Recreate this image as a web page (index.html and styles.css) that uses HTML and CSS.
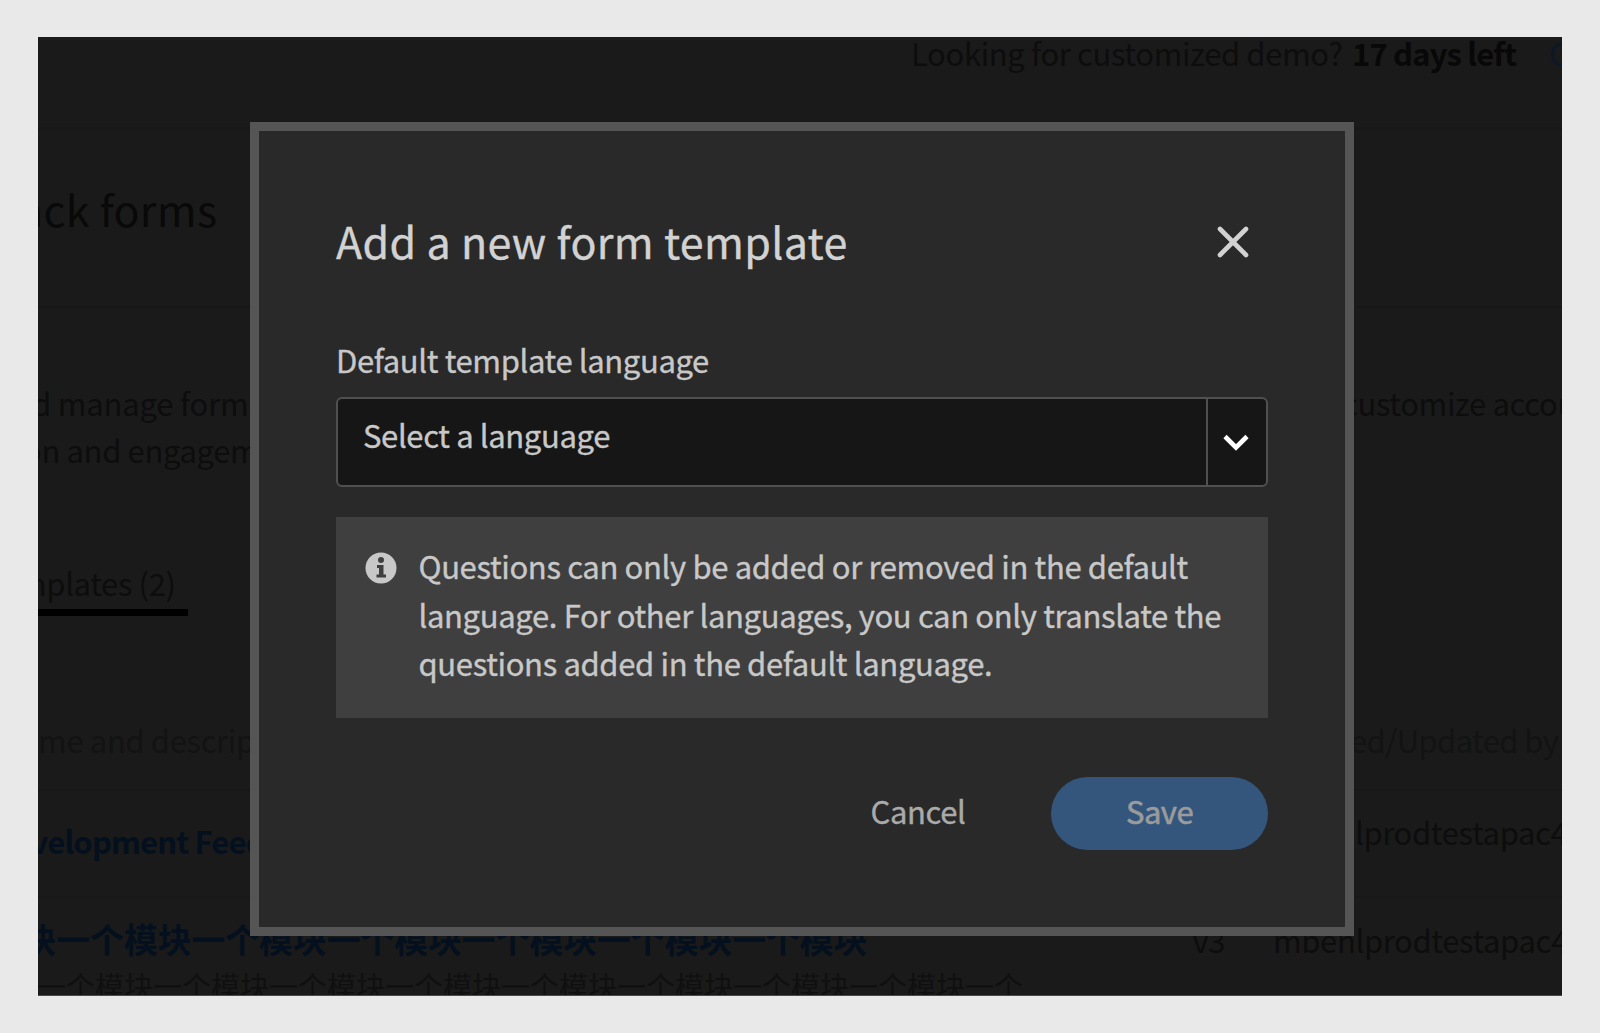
FILE: index.html
```html
<!DOCTYPE html>
<html lang="en">
<head>
<meta charset="utf-8">
<title>Feedback forms</title>
<link rel="stylesheet" href="styles.css">
</head>
<body>
<main class="frame">
  <header class="topbar">
    <span class="demo">Looking for customized demo?</span>
    <strong class="days">17 days left</strong>
    <span class="contact">C</span>
  </header>
  <section class="heading"><h1>ack forms</h1></section>
  <section class="intro">
    <p class="intro-left"><span class="line1">d manage forms</span><br><span class="line2">on and engagem</span></p>
    <p class="intro-right">customize accou</p>
  </section>
  <nav class="tab">mplates (2)</nav>
  <div class="row head">
    <span class="name">ame and descrip</span>
    <span class="owner">ed/Updated by</span>
  </div>
  <div class="row first">
    <span class="name link">velopment Feed</span>
    <span class="owner">lprodtestapac4</span>
  </div>
  <div class="row second">
    <div class="name">
      <div class="cn-title">块一个模块一个模块一个模块一个模块一个模块一个模块</div>
      <div class="cn-desc">一个模块一个模块一个模块一个模块一个模块一个模块一个模块一个模块一个</div>
    </div>
    <span class="version">v3</span>
    <span class="owner">mbenlprodtestapac4</span>
  </div>
</main>

<div class="dialog" role="dialog">
  <div class="dialog-head">
    <h2>Add a new form template</h2>
    <svg class="close" viewBox="0 0 32 32"><path d="M3 3 29 29M29 3 3 29" fill="none" stroke="#d2d2d2" stroke-width="4.600" stroke-linecap="round"/></svg>
  </div>
  <label class="label">Default template language</label>
  <div class="select">
    <span class="value">Select a language</span>
    <span class="arrow"><svg viewBox="0 0 26 18"><path d="M2 2.500 13 13.500 24 2.500" fill="none" stroke="#fff" stroke-width="4.600"/></svg></span>
  </div>
  <div class="info">
    <svg class="info-icon" viewBox="0 0 32 32"><circle cx="16" cy="16" r="15.500" fill="#c8c8c8"/><circle cx="16" cy="8" r="3" fill="#3f3f3f"/><path d="M12 13h6.500v9.500H21v3H11.500v-3H14V16h-2z" fill="#3f3f3f"/></svg>
    <p>Questions can only be added or removed in the default<br>language. For other languages, you can only translate the<br>questions added in the default language.</p>
  </div>
  <div class="actions">
    <span class="cancel">Cancel</span>
    <button class="save">Save</button>
  </div>
</div>
</body>
</html>
```
FILE: styles.css
```css
* { box-sizing: border-box; }
body {
  margin: 0;
  height: 1033px;
  padding: 37px 38px;
  background: #e9e9e9;
  font: 31px/40px "Noto Sans CJK SC", "Noto Sans", sans-serif;
  letter-spacing: -0.370px;
  overflow: hidden;
}
h1, h2, p { margin: 0; font-weight: 400; }
.frame {
  width: 1524px;
  height: 959px;
  overflow: hidden;
  background: #1a1a1a;
  border-bottom: 1px solid #4a4a4a;
  color: #0d0d0d;
  white-space: nowrap;
}
.topbar {
  display: flex;
  height: 93px;
  padding-left: 873px;
  line-height: 31px;
  border-bottom: 3px solid #181818;
}
.topbar > *, .intro > *, .row > * { flex: none; }
.demo { width: 441px; }
.days { width: 197px; color: #080808; letter-spacing: -0.850px; }
.contact { color: #0b1826; }
.heading { height: 178px; padding-top: 53px; border-bottom: 2px solid #171717; }
.heading h1 { font-size: 43px; line-height: 50px; margin-left: -19px; letter-spacing: 0.300px; color: #090909; }
.intro { display: flex; padding-top: 72px; line-height: 46.700px; height: 164.500px; }
.intro-left { width: 1310px; margin-left: -6px; }
.line1 { letter-spacing: -0.200px; }
.line2 { margin-left: -9px; }
.tab {
  width: 150px;
  margin-top: 90px;
  height: 53.500px;
  border-bottom: 7px solid #000;
  text-indent: -20px;
}
.row { display: flex; }
.head { height: 175px; padding-top: 104px; border-bottom: 2px solid #171717; color: #131313; }
.head .name { width: 1312px; text-indent: -17px; }
.head .owner { letter-spacing: -0.600px; }
.first { height: 107px; padding-top: 21px; border-bottom: 2px solid #181818; }
.first .name { width: 1317px; text-indent: -7.500px; }
.link { font-weight: 700; color: #04101d; padding-top: 9px; letter-spacing: -0.850px; }
.second { padding-top: 21px; }
.second .name { width: 1154.500px; letter-spacing: 0; }
.version { width: 80.500px; }
.version, .second .owner { padding-top: 1px; }
.cn-title { margin-left: -15.500px; font-size: 33.800px; font-weight: 700; color: #04101d; }
.cn-desc { font-size: 29px; line-height: 30px; margin: 11px 0 0 -1px; color: #101010; }

.dialog {
  position: absolute;
  left: 250px;
  top: 122px;
  width: 1104px;
  height: 814px;
  border: 9px solid #555;
  padding: 86px 77px 0;
  background: #292929;
  color: #c8c8c8;
  white-space: nowrap;
  -webkit-text-stroke: 0.350px currentColor;
}
.dialog-head { display: flex; justify-content: space-between; height: 112px; padding-right: 19px; }
.dialog-head h2 { font-size: 43px; line-height: 46px; letter-spacing: 0.330px; color: #d2d2d2; }
.close { width: 32px; height: 32px; margin-top: 9px; }
.label { display: block; height: 68px; line-height: 62px; }
.select {
  display: flex;
  height: 90px;
  border: 2px solid #505050;
  border-radius: 6px;
  background: #161616;
  line-height: 72px;
}
.value { flex: 1; padding-left: 25px; }
.arrow { width: 60px; border-left: 2px solid #505050; display: flex; padding: 35px 0 0 15px; }
.arrow svg { width: 26px; height: 18px; }
.info { display: flex; height: 201px; margin-top: 30px; padding: 25px 0 0 29px; background: #3f3f3f; line-height: 48.500px; letter-spacing: -0.350px; }
.info-icon { width: 32px; height: 32px; margin: 10px 21.500px 0 0; }
.actions { display: flex; justify-content: flex-end; margin-top: 59px; line-height: 68px; }
.cancel { width: 180.500px; color: #aaa; }
.save {
  width: 217px;
  height: 73px;
  border: 0;
  border-radius: 37px;
  background: #34567d;
  color: #9b9b9b;
  font: inherit;
  letter-spacing: -0.500px;
  line-height: 67px;
  padding: 0 0 6px;
  -webkit-text-stroke: 0.600px currentColor;
}
```
